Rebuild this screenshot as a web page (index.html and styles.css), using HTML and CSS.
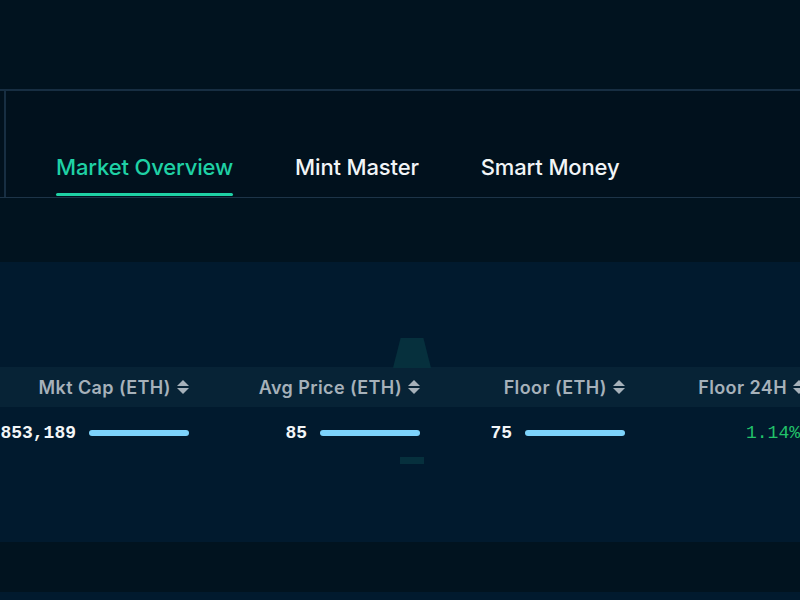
FILE: index.html
```html
<!DOCTYPE html>
<html>
<head>
<meta charset="utf-8">
<link rel="stylesheet" href="styles.css">
</head>
<body>
<div class="topbar"></div>
<nav class="tabs">
  <div class="tabs-inner">
    <a class="tab active">Market Overview</a>
    <a class="tab">Mint Master</a>
    <a class="tab">Smart Money</a>
  </div>
</nav>
<div class="spacer"></div>
<section class="panel">
  <div class="ghost ghost-top"></div>
  <div class="ghost ghost-bottom"></div>
  <div class="table">
    <div class="row head">
      <div class="cell c1">Mkt Cap (ETH)<span class="sort"></span></div>
      <div class="cell c2">Avg Price (ETH)<span class="sort"></span></div>
      <div class="cell c3">Floor (ETH)<span class="sort"></span></div>
      <div class="cell c4">Floor 24H<span class="sort"></span></div>
    </div>
    <div class="row data">
      <div class="cell c1"><span class="num">853,189</span><span class="bar" style="width:100px"></span></div>
      <div class="cell c2"><span class="num">85</span><span class="bar" style="width:100px"></span></div>
      <div class="cell c3"><span class="num">75</span><span class="bar" style="width:100px"></span></div>
      <div class="cell c4"><span class="num up">1.14%</span></div>
    </div>
  </div>
</section>
<div class="footer-gap"></div>
<div class="panel-tail"></div>
</body>
</html>
```
FILE: styles.css
```css
* { box-sizing: border-box; }
html, body {
  margin: 0;
  height: 600px;
  overflow: hidden;
  background: #01131f;
  font-family: Inter, "Noto Sans", sans-serif;
}
.topbar { height: 89px; background: #01131f; }
.tabs {
  height: 109px;
  border-top: 2px solid #172e42;
  border-bottom: 1px solid #1d3448;
  background: #01111d;
}
.tabs-inner {
  height: 100%;
  margin-left: 4px;
  border-left: 2px solid #172e42;
  display: flex;
  align-items: flex-end;
  gap: 62px;
  padding-left: 50px;
}
.tab {
  font-size: 22px;
  font-weight: 500;
  color: #f2f5f7;
  padding-bottom: 17px;
  position: relative;
  line-height: 26px;
  letter-spacing: -0.15px;
}
.tab.active { color: #1fd1a5; }
.tab.active::after {
  content: "";
  position: absolute;
  left: 0; right: 0; bottom: 1px;
  height: 3px;
  border-radius: 2px;
  background: #1fd1a5;
}
.spacer { height: 64px; background: #01131f; }
.panel {
  position: relative;
  height: 280px;
  background: #011a2e;
  padding-top: 105px;
  overflow: hidden;
}
.ghost { position: absolute; background: #06303d; }
.ghost-top {
  left: 393px; top: 76px; width: 38px; height: 30px;
  clip-path: polygon(20% 0, 80% 0, 100% 100%, 0 100%);
}
.ghost-bottom { left: 400px; top: 195px; width: 24px; height: 7px; }
.table { width: 810px; }
.row { display: flex; }
.row.head { height: 40px; background: #072336; }
.row.data { height: 52px; }
.cell {
  display: flex;
  align-items: center;
  justify-content: flex-end;
  flex: none;
}
.c1 { width: 189px; }
.c2 { width: 231px; }
.c3 { width: 205px; }
.c4 { width: 180px; }
.data .c4 { padding-right: 5px; }
.head .cell {
  font-size: 18px;
  font-weight: 600;
  color: #a6b1ba;
  letter-spacing: 0.4px;
}
.sort {
  width: 12px; height: 18px;
  margin-left: 6px;
  position: relative;
}
.sort::before, .sort::after {
  content: "";
  position: absolute;
  left: 0;
  border-left: 6px solid transparent;
  border-right: 6px solid transparent;
}
.sort::before { top: 2px; border-bottom: 6px solid #a6b1ba; }
.sort::after { bottom: 2px; border-top: 6px solid #a6b1ba; }
.num {
  font-family: "Liberation Mono", "DejaVu Sans Mono", monospace;
  font-size: 18px;
  font-weight: 700;
  color: #f3f6f8;
}
.num.up { color: #22c36a; font-weight: 400; }
.bar {
  height: 6px;
  border-radius: 3px;
  background: #7dd3fc;
  margin-left: 13px;
}
.footer-gap { height: 50px; background: #01131f; }
.panel-tail { height: 20px; background: #011a2e; }
```
